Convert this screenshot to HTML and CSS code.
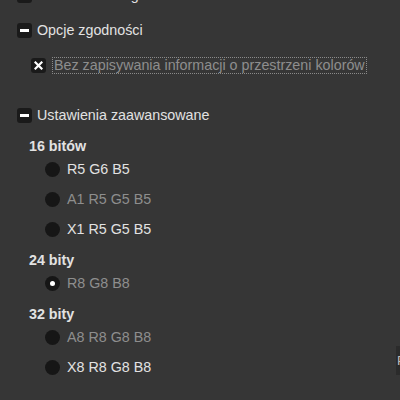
FILE: index.html
```html
<!DOCTYPE html>
<html lang="pl">
<head>
<meta charset="utf-8">
<link rel="stylesheet" href="styles.css">
</head>
<body>
<div class="panel">
  <div class="row top-row">
    <span class="box"></span>
    <span class="label">Kodowanie długości serii</span>
  </div>

  <div class="row expander">
    <span class="box"><span class="minus"></span></span>
    <span class="label">Opcje zgodności</span>
  </div>
  <div class="row check">
    <span class="box">
      <svg width="9" height="9" viewBox="0 0 9 9"><path d="M1.5 1.5 L7.5 7.5 M7.5 1.5 L1.5 7.5" stroke="#fff" stroke-width="2.2" stroke-linecap="square"/></svg>
    </span>
    <span class="label dim focus">Bez zapisywania informacji o przestrzeni kolorów</span>
  </div>

  <div class="row expander adv">
    <span class="box"><span class="minus"></span></span>
    <span class="label">Ustawienia zaawansowane</span>
  </div>

  <div class="group first">
    <div class="heading">16 bitów</div>
    <div class="radios">
      <div class="row radio"><span class="dot"></span><span class="label">R5 G6 B5</span></div>
      <div class="row radio"><span class="dot"></span><span class="label dim">A1 R5 G5 B5</span></div>
      <div class="row radio"><span class="dot"></span><span class="label">X1 R5 G5 B5</span></div>
    </div>
  </div>

  <div class="group">
    <div class="heading">24 bity</div>
    <div class="radios">
      <div class="row radio"><span class="dot on"></span><span class="label dim">R8 G8 B8</span></div>
    </div>
  </div>

  <div class="group">
    <div class="heading">32 bity</div>
    <div class="radios">
      <div class="row radio"><span class="dot"></span><span class="label dim">A8 R8 G8 B8</span></div>
      <div class="row radio"><span class="dot"></span><span class="label">X8 R8 G8 B8</span></div>
    </div>
  </div>
</div>
<div class="edge"><span>P</span></div>
</body>
</html>
```
FILE: styles.css
```css
html, body {
  margin: 0;
  padding: 0;
  width: 400px;
  height: 400px;
  overflow: hidden;
  background: #363636;
}
body {
  position: relative;
  font-family: "Liberation Sans", Arial, sans-serif;
  font-size: 14.3px;
  color: #e2e2e2;
}
.panel {
  display: flex;
  flex-direction: column;
  padding-left: 17px;
  margin-top: -13px;
}
.row {
  display: flex;
  align-items: center;
  height: 16px;
}
.box {
  width: 15px;
  height: 15px;
  border-radius: 3px;
  background: #1a1a1a;
  display: flex;
  align-items: center;
  justify-content: center;
  flex: none;
}
.minus {
  width: 9px;
  height: 3px;
  background: #fff;
}
.label {
  margin-left: 5px;
  white-space: nowrap;
  line-height: 16px;
}
.dim {
  color: #8e8e8e;
}
.expander {
  margin-top: 19px;
}
.expander.adv {
  margin-top: 33px;
}
.check {
  margin-top: 19px;
  margin-left: 14px;
  height: 17px;
}
.focus {
  margin-left: 6px;
  padding: 0 1px;
  border: 1px dotted #8a8a8a;
  line-height: 15px;
}
.group {
  display: flex;
  flex-direction: column;
  padding-left: 12px;
  margin-top: 15px;
}
.heading {
  font-weight: bold;
  height: 16px;
  line-height: 16px;
}
.radios {
  display: flex;
  flex-direction: column;
  gap: 14px;
  padding-left: 16px;
  margin-top: 7px;
}
.dot {
  width: 15px;
  height: 15px;
  border-radius: 50%;
  background: #161616;
  flex: none;
  display: flex;
  align-items: center;
  justify-content: center;
}
.dot.on::after {
  content: "";
  width: 5px;
  height: 5px;
  border-radius: 50%;
  background: #fff;
}
.radio .label {
  margin-left: 7px;
}
.edge {
  position: absolute;
  left: 396px;
  top: 346px;
  width: 6px;
  height: 29px;
  background: #2b2b2b;
  overflow: hidden;
  color: #bdbdbd;
  font-size: 13px;
  line-height: 29px;
}
.edge span {
  margin-left: 1px;
}
```
